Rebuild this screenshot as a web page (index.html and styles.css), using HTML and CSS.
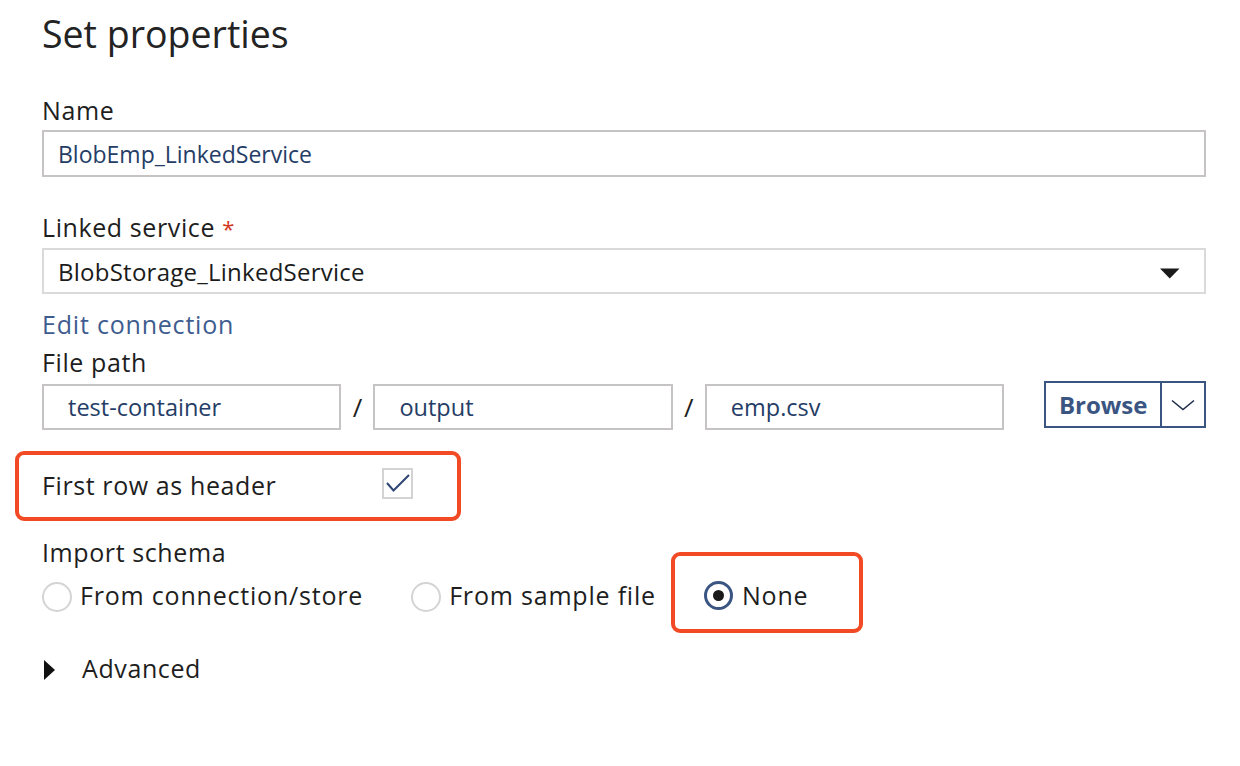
FILE: index.html
```html
<!DOCTYPE html>
<html lang="en">
<head>
<meta charset="utf-8">
<title>Set properties</title>
<link rel="stylesheet" href="styles.css">
</head>
<body>
<main class="panel">
  <h1 class="title">Set properties</h1>

  <div class="field field-name">
    <div class="label">Name</div>
    <div class="input input-name">BlobEmp_LinkedService</div>
  </div>

  <div class="field field-linked">
    <div class="label">Linked service <span class="req">*</span></div>
    <div class="select">
      <span class="select-value">BlobStorage_LinkedService</span>
      <svg class="caret" width="20" height="11" viewBox="0 0 20 11"><path d="M0 0.5 L19.5 0.5 L9.75 10.5 Z" fill="#1a1a1a"/></svg>
    </div>
  </div>

  <div class="link">Edit connection</div>
  <div class="label file-label">File path</div>

  <div class="path-row">
    <div class="input path-input">test-container</div>
    <span class="slash">/</span>
    <div class="input path-input">output</div>
    <span class="slash">/</span>
    <div class="input path-input">emp.csv</div>
    <div class="browse">
      <span class="browse-text">Browse</span>
      <span class="browse-drop">
        <svg width="24" height="12" viewBox="0 0 24 12"><path d="M1 1.5 L12 10.5 L23 1.5" fill="none" stroke="#1f2f4a" stroke-width="1.6"/></svg>
      </span>
    </div>
  </div>

  <div class="highlight header-row">
    <span class="label">First row as header</span>
    <span class="checkbox">
      <svg width="27" height="27" viewBox="0 0 27 27"><path d="M3 13 L9.5 20.5 L25 5" fill="none" stroke="#2d4673" stroke-width="2"/></svg>
    </span>
  </div>

  <div class="label schema-label">Import schema</div>
  <div class="radios">
    <div class="radio"><span class="circle"></span><span class="radio-text">From connection/store</span></div>
    <div class="radio"><span class="circle"></span><span class="radio-text">From sample file</span></div>
    <div class="radio radio-on highlight"><span class="circle"><span class="dot"></span></span><span class="radio-text">None</span></div>
  </div>

  <div class="advanced"><span class="tri"></span><span class="adv-text">Advanced</span></div>
</main>
</body>
</html>
```

FILE: styles.css
```css
html, body {
  margin: 0;
  padding: 0;
  background: #ffffff;
}

body {
  font-family: "Open Sans", "Noto Sans", sans-serif;
  color: #1e1e1e;
  width: 1240px;
  height: 766px;
  overflow: hidden;
}

.panel {
  padding: 12px 0 0 42px;
  width: 1164px;
}

.title {
  margin: 0;
  font-size: 37.5px;
  line-height: 44px;
  font-weight: 400;
  color: #232323;
}

.label {
  font-size: 25px;
  line-height: 30px;
  letter-spacing: 0.6px;
  color: #1e1e1e;
}

.field-name {
  margin-top: 39px;
}

.field-name .label {
  margin-bottom: 5px;
}

.field-linked {
  margin-top: 35px;
}

.field-linked .label {
  margin-bottom: 5px;
}

.req {
  color: #d4351c;
  font-size: 22px;
}

.input {
  box-sizing: border-box;
  height: 47px;
  border: 2px solid #c6c3c4;
  padding: 0 14px;
  display: flex;
  align-items: center;
  font-size: 24px;
  color: #253d66;
  background: #fff;
}

.input-name {
  font-size: 23px;
}

.select {
  box-sizing: border-box;
  height: 46px;
  border: 2px solid #dadada;
  padding: 0 24px 0 14px;
  display: flex;
  align-items: center;
  justify-content: space-between;
  font-size: 24px;
  letter-spacing: 0.25px;
  color: #1b1b1b;
}

.caret {
  display: block;
  margin-top: 4px;
}

.link {
  margin-top: 15px;
  font-size: 25px;
  line-height: 30px;
  letter-spacing: 0.8px;
  color: #3e5c8f;
}

.file-label {
  margin-top: 8px;
}

.path-row {
  margin-top: 4px;
  display: flex;
  align-items: flex-start;
}

.path-input {
  width: 300px;
  height: 46px;
  margin-top: 3px;
  padding-left: 24px;
  font-size: 23.5px;
}

.slash {
  width: 32px;
  text-align: center;
  font-size: 26px;
  line-height: 46px;
  margin-top: 3px;
  color: #1e1e1e;
}

.browse {
  margin-left: 40px;
  box-sizing: border-box;
  height: 47px;
  width: 162px;
  border: 2px solid #3b5583;
  display: flex;
  align-items: stretch;
}

.browse-text {
  flex: 1;
  display: flex;
  align-items: center;
  justify-content: center;
  font-size: 24px;
  font-weight: 700;
  color: #3b5583;
  border-right: 2px solid #3b5583;
}

.browse-drop {
  width: 42px;
  display: flex;
  align-items: center;
  justify-content: center;
}

.highlight {
  border: 4px solid #f14a24;
  border-radius: 9px;
}

.header-row {
  box-sizing: border-box;
  margin-top: 21px;
  margin-left: -27px;
  width: 446px;
  height: 70px;
  padding: 0 44px 0 23px;
  display: flex;
  align-items: center;
  justify-content: space-between;
}

.header-row .label {
  margin-top: -2px;
}

.checkbox {
  box-sizing: border-box;
  width: 31px;
  height: 31px;
  border: 2px solid #d3d3d3;
  display: flex;
  align-items: center;
  justify-content: center;
  margin-top: -5px;
}

.checkbox svg {
  display: block;
}

.schema-label {
  margin-top: 16px;
}

.radios {
  margin-top: 10px;
  display: flex;
  align-items: center;
  gap: 48px;
}

.radio {
  display: flex;
  align-items: center;
  gap: 8px;
  font-size: 25px;
  line-height: 30px;
  letter-spacing: 0.8px;
  color: #1e1e1e;
}

.circle {
  box-sizing: border-box;
  width: 30px;
  height: 30px;
  border-radius: 50%;
  border: 2px solid #d4d4d4;
  margin-top: 4px;
  display: flex;
  align-items: center;
  justify-content: center;
}

.radio-on {
  padding: 23px 51px 19px 29px;
  margin: -25px -55px -21px -33px;
  gap: 9px;
}

.radio-on .circle {
  border: 3px solid #3b5583;
  width: 29px;
  height: 29px;
  margin-top: 2px;
}

.dot {
  width: 11px;
  height: 11px;
  border-radius: 50%;
  background: #1a1a1a;
}

.advanced {
  margin-top: 41px;
  display: flex;
  align-items: center;
  font-size: 25px;
  line-height: 30px;
  letter-spacing: 0.6px;
  color: #1e1e1e;
}

.tri {
  width: 0;
  height: 0;
  border-left: 11px solid #111;
  border-top: 10px solid transparent;
  border-bottom: 10px solid transparent;
  margin-left: 2px;
  margin-right: 27px;
  margin-top: 4px;
}
```
